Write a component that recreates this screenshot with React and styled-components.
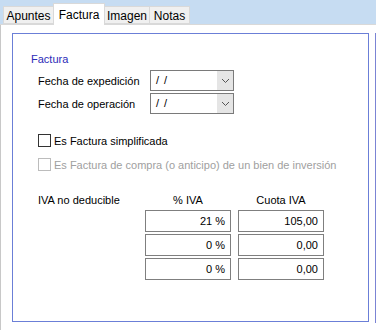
import React from "react";
import styled, { createGlobalStyle } from "styled-components";

const Global = createGlobalStyle`
  html, body { margin: 0; padding: 0; background: #ffffff; }
  body { font-family: "Liberation Sans", Arial, sans-serif; font-size: 11px; color: #000; }
  * { box-sizing: border-box; }
`;

const Window = styled.div`
  width: 376px;
  height: 330px;
  display: flex;
  flex-direction: column;
  overflow: hidden;
  background: #ffffff;
`;

const TabStrip = styled.div`
  height: 25px;
  flex: none;
  display: flex;
  align-items: flex-end;
  padding-left: 3px;
  background: #c6dcf2;
  border-bottom: 1px solid #d9d9d9;
`;

const Tab = styled.div`
  height: ${(p) => (p.$active ? "22px" : "18px")};
  margin-bottom: ${(p) => (p.$active ? "-1px" : "0")};
  display: flex;
  align-items: center;
  justify-content: center;
  background: ${(p) => (p.$active ? "#ffffff" : "#f0f0f0")};
  border: 1px solid #d9d9d9;
  border-bottom: ${(p) => (p.$active ? "none" : "1px solid #d9d9d9")};
  margin-left: ${(p) => (p.$first ? "0" : "-1px")};
  padding-top: ${(p) => (p.$active ? "0" : "1px")};
  font-size: 12px;
  line-height: 14px;
  color: #000;
  width: ${(p) => p.$w}px;
`;

const Page = styled.div`
  flex: 1;
  display: flex;
  justify-content: space-between;
  align-items: flex-start;
  padding: 8px 0 0 11px;
  border-left: 1px solid #c8c8c8;
`;

const Frame = styled.div`
  width: 357px;
  height: 289px;
  border: 1px solid #6b7fd7;
  padding: 18px 0 0 18px;
  display: flex;
  flex-direction: column;
`;

const RightRule = styled.div`
  width: 1px;
  height: 290px;
  background: #7b84d4;
`;

const Heading = styled.div`
  color: #2c2cb8;
  font-size: 11px;
  line-height: 14px;
  height: 14px;
  margin-bottom: 4px;
`;

const FormGrid = styled.div`
  display: grid;
  grid-template-columns: 112px 84px;
  row-gap: 2px;
  margin-left: 7px;
  align-items: center;
`;

const Label = styled.div`
  font-size: 11px;
  line-height: 14px;
  white-space: nowrap;
  color: ${(p) => (p.$disabled ? "#a0a0a0" : "#000")};
`;

const Combo = styled.div`
  height: 21px;
  display: flex;
  border: 1px solid #7a7a7a;
  background: #fff;
`;

const ComboText = styled.div`
  flex: 1;
  padding-left: 5px;
  font-size: 11px;
  line-height: 19px;
  letter-spacing: 1px;
`;

const ComboButton = styled.div`
  width: 16px;
  background: #e5e5e5;
  display: flex;
  align-items: center;
  justify-content: center;
`;

const Checks = styled.div`
  display: flex;
  flex-direction: column;
  gap: 11px;
  margin: 20px 0 0 7px;
`;

const CheckRow = styled.label`
  display: flex;
  align-items: center;
  gap: 3px;
  height: 13px;
`;

const Box = styled.span`
  width: 13px;
  height: 13px;
  flex: none;
  border: 1px solid ${(p) => (p.$disabled ? "#bcbcbc" : "#333333")};
  background: #fff;
`;

const IvaGrid = styled.div`
  display: grid;
  grid-template-columns: 100px 86px 86px;
  column-gap: 7px;
  row-gap: 2px;
  margin: 22px 0 0 7px;
`;

const ColHead = styled.div`
  font-size: 11px;
  line-height: 14px;
  text-align: ${(p) => p.$align || "center"};
  margin-bottom: 1px;
  white-space: nowrap;
`;

const NumBox = styled.div`
  height: 22px;
  border: 1px solid #7f7f7f;
  background: #fff;
  text-align: right;
  padding-right: 5px;
  font-size: 11px;
  line-height: 20px;
`;

const Chevron = () => (
  <svg width="9" height="6" viewBox="0 0 9 6">
    <path d="M1 1 L4.5 4.5 L8 1" fill="none" stroke="#555" strokeWidth="1" />
  </svg>
);

const rows = [
  ["21 %", "105,00"],
  ["0 %", "0,00"],
  ["0 %", "0,00"],
];

export default function App() {
  return (
    <Window>
      <Global />
      <TabStrip>
        <Tab $w={51} $first>Apuntes</Tab>
        <Tab $w={52} $active>Factura</Tab>
        <Tab $w={46}>Imagen</Tab>
        <Tab $w={41}>Notas</Tab>
      </TabStrip>
      <Page>
        <Frame>
          <Heading>Factura</Heading>
          <FormGrid>
            <Label>Fecha de expedición</Label>
            <Combo>
              <ComboText>/ /</ComboText>
              <ComboButton><Chevron /></ComboButton>
            </Combo>
            <Label>Fecha de operación</Label>
            <Combo>
              <ComboText>/ /</ComboText>
              <ComboButton><Chevron /></ComboButton>
            </Combo>
          </FormGrid>
          <Checks>
            <CheckRow>
              <Box />
              <Label>Es Factura simplificada</Label>
            </CheckRow>
            <CheckRow>
              <Box $disabled />
              <Label $disabled>Es Factura de compra (o anticipo) de un bien de inversión</Label>
            </CheckRow>
          </Checks>
          <IvaGrid>
            <ColHead $align="left">IVA no deducible</ColHead>
            <ColHead>% IVA</ColHead>
            <ColHead>Cuota IVA</ColHead>
            {rows.map(([p, c], i) => (
              <React.Fragment key={i}>
                <div />
                <NumBox>{p}</NumBox>
                <NumBox>{c}</NumBox>
              </React.Fragment>
            ))}
          </IvaGrid>
        </Frame>
        <RightRule />
      </Page>
    </Window>
  );
}
